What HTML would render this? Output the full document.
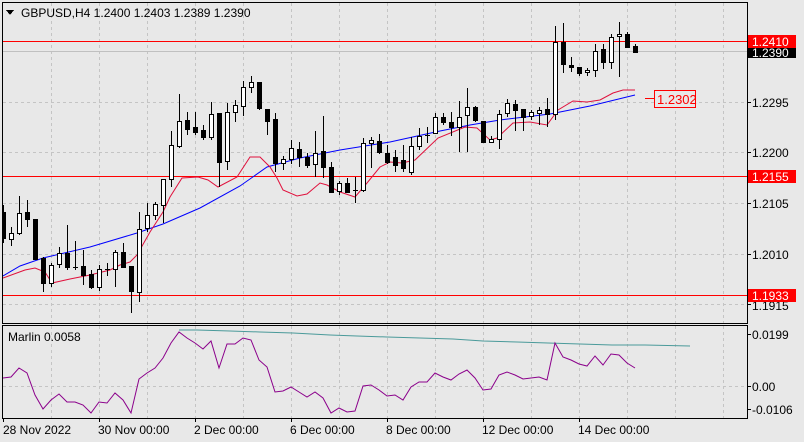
<!DOCTYPE html>
<html><head><meta charset="utf-8"><style>
html,body{margin:0;padding:0;background:#e8e8e8;width:804px;height:442px;overflow:hidden}
svg{display:block;font-family:"Liberation Sans",sans-serif;font-size:12px}
</style></head><body>
<svg width="804" height="442" viewBox="0 0 804 442" shape-rendering="crispEdges">
<rect width="804" height="442" fill="#e8e8e8"/>
<defs><clipPath id="m"><rect x="3" y="3" width="744" height="320"/></clipPath>
<clipPath id="i"><rect x="3" y="326" width="744" height="92"/></clipPath></defs>
<!-- grid main -->
<g stroke="#c4c4c4" stroke-dasharray="3,3" stroke-width="1">
<path d="M51.5 3V323M99.5 3V323M147.5 3V323M195.5 3V323M243.5 3V323M291.5 3V323M339.5 3V323M387.5 3V323M435.5 3V323M483.5 3V323M531.5 3V323M579.5 3V323M627.5 3V323M675.5 3V323M723.5 3V323"/>
<path d="M3 102.5H747M3 152.5H747M3 203.5H747M3 254.5H747M3 304.5H747"/>
<path d="M51.5 326V418M99.5 326V418M147.5 326V418M195.5 326V418M243.5 326V418M291.5 326V418M339.5 326V418M387.5 326V418M435.5 326V418M483.5 326V418M531.5 326V418M579.5 326V418M627.5 326V418M675.5 326V418M723.5 326V418"/>
<path d="M3 386.5H747"/>
</g>
<line x1="3" y1="51.5" x2="747" y2="51.5" stroke="#c0c0c0"/>
<g stroke="#ff0000"><line x1="3" y1="41.5" x2="747" y2="41.5"/><line x1="3" y1="176.5" x2="747" y2="176.5"/><line x1="3" y1="295.5" x2="747" y2="295.5"/></g>
<g clip-path="url(#m)" shape-rendering="auto" fill="none" stroke-width="1">
<polyline stroke="#0000ff" points="3,276 20,266 43,258 90,247 137,233 163,224 200,208 240,186 267,167 300,158 340,150 390,142 440,131 470,125 500,120 550,114 590,106 635,95"/>
<polyline stroke="#e0103c" points="3,278 25,270 35,268 45,272 52,283 70,279 90,275 110,270 120,265 130,262 137,255 150,232 163,212 170,197 182,178 198,177 208,180 218,187 237,177 250,157 260,157 270,167 277,178 283,190 297,196 307,194 320,183 327,185 340,192 355,197 367,183 380,167 390,162 402,163 415,160 438,138 465,127 477,128 490,140 497,138 513,123 530,122 547,125 558,110 573,101 587,102 600,100 613,93 623,90 635,90"/>
</g>
<g clip-path="url(#m)" stroke="#000" stroke-width="1" id="c"></g>
<g clip-path="url(#m)" stroke="#000">
<path d="M3.5 205V243M11.5 227V246M19.5 196V235M27.5 200V227M35.5 219V259M43.5 257V292M51.5 263V287M59.5 247V268M67.5 225V270M75.5 241V270M83.5 250V285M91.5 270V289M99.5 265V291M107.5 263V276M115.5 250V287M123.5 243V267M131.5 266V313M139.5 212V302M147.5 203V232M155.5 202V220M163.5 179V223M171.5 131V187M179.5 94V148M187.5 112V135M195.5 112V135M203.5 125V140M211.5 102V140M219.5 113V187M227.5 103V170M235.5 100V122M243.5 81V116M251.5 76V93M259.5 82V110M267.5 109V135M275.5 113V172M283.5 156V170M291.5 140V164M299.5 142V167M307.5 153V168M315.5 131V177M323.5 116V178M331.5 162V192M339.5 181V195M347.5 178V193M355.5 177V203M363.5 138V192M371.5 137V168M379.5 134V154M387.5 145V164M395.5 150V172M403.5 145V172M411.5 137V175M419.5 128V150M427.5 127V143M435.5 113V134M443.5 113V125M451.5 112V136M459.5 101V152M467.5 88V152M475.5 106V122M483.5 121V142M491.5 136V143M499.5 110V149M507.5 99V117M515.5 100V131M523.5 109V131M531.5 110V120M539.5 107V125M547.5 98V127M555.5 26V120M563.5 23V73M571.5 57V72M579.5 67V76M587.5 68V76M595.5 44V77M603.5 44V69M611.5 34V69M619.5 22V77M627.5 32V47M635.5 44V53"/>
<path d="M73 267.5H78M105 269.5H110M353 190.5H358M425 135.5H430"/>
<g fill="#000">
<rect x="1.5" y="212.5" width="4" height="26"/><rect x="25.5" y="212.5" width="4" height="7"/><rect x="33.5" y="219.5" width="4" height="40"/><rect x="41.5" y="258.5" width="4" height="25"/><rect x="65.5" y="253.5" width="4" height="14"/><rect x="81.5" y="266.5" width="4" height="9"/><rect x="89.5" y="274.5" width="4" height="13"/><rect x="121.5" y="252.5" width="4" height="15"/><rect x="129.5" y="266.5" width="4" height="25"/><rect x="185.5" y="120.5" width="4" height="9"/><rect x="193.5" y="127.5" width="4" height="5"/><rect x="201.5" y="130.5" width="4" height="7"/><rect x="217.5" y="113.5" width="4" height="49"/><rect x="257.5" y="82.5" width="4" height="26"/><rect x="265.5" y="109.5" width="4" height="12"/><rect x="273.5" y="119.5" width="4" height="44"/><rect x="297.5" y="149.5" width="4" height="8"/><rect x="305.5" y="157.5" width="4" height="8"/><rect x="321.5" y="151.5" width="4" height="16"/><rect x="329.5" y="167.5" width="4" height="25"/><rect x="345.5" y="183.5" width="4" height="9"/><rect x="377.5" y="141.5" width="4" height="11"/><rect x="385.5" y="153.5" width="4" height="9"/><rect x="393.5" y="157.5" width="4" height="8"/><rect x="401.5" y="160.5" width="4" height="8"/><rect x="441.5" y="117.5" width="4" height="5"/><rect x="449.5" y="122.5" width="4" height="5"/><rect x="473.5" y="107.5" width="4" height="13"/><rect x="481.5" y="121.5" width="4" height="21"/><rect x="513.5" y="104.5" width="4" height="6"/><rect x="521.5" y="109.5" width="4" height="8"/><rect x="545.5" y="109.5" width="4" height="5"/><rect x="561.5" y="42.5" width="4" height="22"/><rect x="569.5" y="65.5" width="4" height="2"/><rect x="577.5" y="67.5" width="4" height="6"/><rect x="601.5" y="49.5" width="4" height="13"/><rect x="625.5" y="34.5" width="4" height="13"/><rect x="633.5" y="46.5" width="4" height="6"/>
</g>
<g fill="#fff">
<rect x="9.5" y="233.5" width="4" height="6"/><rect x="17.5" y="213.5" width="4" height="20"/><rect x="49.5" y="265.5" width="4" height="18"/><rect x="57.5" y="253.5" width="4" height="11"/><rect x="97.5" y="269.5" width="4" height="18"/><rect x="113.5" y="252.5" width="4" height="17"/><rect x="137.5" y="229.5" width="4" height="63"/><rect x="145.5" y="215.5" width="4" height="13"/><rect x="153.5" y="204.5" width="4" height="11"/><rect x="161.5" y="179.5" width="4" height="26"/><rect x="169.5" y="145.5" width="4" height="34"/><rect x="177.5" y="121.5" width="4" height="25"/><rect x="209.5" y="114.5" width="4" height="23"/><rect x="225.5" y="112.5" width="4" height="49"/><rect x="233.5" y="105.5" width="4" height="7"/><rect x="241.5" y="87.5" width="4" height="19"/><rect x="249.5" y="82.5" width="4" height="5"/><rect x="281.5" y="159.5" width="4" height="4"/><rect x="289.5" y="148.5" width="4" height="11"/><rect x="313.5" y="153.5" width="4" height="11"/><rect x="337.5" y="183.5" width="4" height="8"/><rect x="361.5" y="143.5" width="4" height="47"/><rect x="369.5" y="140.5" width="4" height="3"/><rect x="409.5" y="146.5" width="4" height="26"/><rect x="417.5" y="136.5" width="4" height="10"/><rect x="433.5" y="117.5" width="4" height="16"/><rect x="457.5" y="117.5" width="4" height="10"/><rect x="465.5" y="107.5" width="4" height="8"/><rect x="489.5" y="139.5" width="4" height="3"/><rect x="497.5" y="114.5" width="4" height="25"/><rect x="505.5" y="103.5" width="4" height="10"/><rect x="529.5" y="112.5" width="4" height="4"/><rect x="537.5" y="110.5" width="4" height="3"/><rect x="553.5" y="42.5" width="4" height="72"/><rect x="585.5" y="70.5" width="4" height="2"/><rect x="593.5" y="51.5" width="4" height="19"/><rect x="609.5" y="37.5" width="4" height="25"/><rect x="617.5" y="34.5" width="4" height="2"/>
</g>
</g>
<!-- 1.2302 label -->
<line x1="645" y1="98.5" x2="654" y2="98.5" stroke="#ff0000"/>
<rect x="654.5" y="90.5" width="41" height="17" fill="#e8e8e8" stroke="#ff0000"/>
<text x="657" y="104" fill="#ff0000" font-size="13">1.2302</text>
<!-- indicator -->
<g clip-path="url(#i)" shape-rendering="auto" fill="none">
<polyline stroke="#4a9a9a" points="179,330 197,330 230,331 260,332 293,333 330,335 357,336 387,337 420,338 453,339 483,341 517,342 548,343 580,344 612,345 645,345 690,346"/>
<polyline stroke="#8b008b" points="3,378 11,377 19,368 27,373 35,395 43,409 51,400 59,394 67,402 75,402 83,405 91,413 99,402 107,403 115,393 123,400 131,413 139,379 147,373 155,368 163,358 171,343 179,332 187,338 195,343 203,349 211,341 219,368 227,344 235,344 243,338 251,340 259,360 267,367 275,392 283,391 291,387 299,392 307,397 315,392 323,398 331,413 339,408 347,412 355,411 363,386 371,385 379,390 387,396 395,395 403,400 411,387 419,382 427,382 435,373 443,377 451,380 459,374 467,370 475,378 483,390 491,389 499,375 507,372 515,375 523,379 531,378 539,377 547,380 555,343 563,357 571,360 579,364 587,366 595,356 603,365 611,354 619,355 627,363 635,368"/>
</g>
<!-- frames -->
<g fill="none" stroke="#000">
<rect x="2.5" y="2.5" width="745" height="321"/>
<rect x="2.5" y="325.5" width="745" height="93"/>
</g>
<g stroke="#000"><path d="M748 102.5H751M748 152.5H751M748 203.5H751M748 254.5H751M748 304.5H751M748 334.5H751M748 386.5H751M748 409.5H751"/>
<path d="M3.5 419V422M99.5 419V422M195.5 419V422M291.5 419V422M387.5 419V422M483.5 419V422M579.5 419V422"/></g>
<!-- title -->
<path d="M6 10H14L10 15Z" fill="#000"/>
<text x="21" y="17" fill="#000">GBPUSD,H4  1.2400 1.2403 1.2389 1.2390</text>
<text x="8" y="341" fill="#000">Marlin 0.0058</text>
<!-- right axis -->
<g fill="#000">
<text x="752" y="107">1.2295</text>
<text x="752" y="157">1.2200</text>
<text x="752" y="208">1.2105</text>
<text x="752" y="259">1.2010</text>
<text x="752" y="310">1.1915</text>
<text x="752" y="339">0.0199</text>
<text x="752" y="391">0.00</text>
<text x="752" y="414">-0.0106</text>
</g>
<rect x="748" y="47" width="48" height="11" fill="#000"/>
<text x="752" y="57" fill="#fff">1.2390</text>
<rect x="748" y="35" width="48" height="13" fill="#ff0000"/>
<text x="752" y="46" fill="#fff">1.2410</text>
<rect x="748" y="170" width="48" height="13" fill="#ff0000"/>
<text x="752" y="181" fill="#fff">1.2155</text>
<rect x="748" y="289" width="48" height="13" fill="#ff0000"/>
<text x="752" y="300" fill="#fff">1.1933</text>
<!-- dates -->
<g fill="#000">
<text x="3" y="434">28 Nov 2022</text>
<text x="98" y="434">30 Nov 00:00</text>
<text x="194" y="434">2 Dec 00:00</text>
<text x="290" y="434">6 Dec 00:00</text>
<text x="386" y="434">8 Dec 00:00</text>
<text x="482" y="434">12 Dec 00:00</text>
<text x="578" y="434">14 Dec 00:00</text>
</g>
</svg>
</body></html>
